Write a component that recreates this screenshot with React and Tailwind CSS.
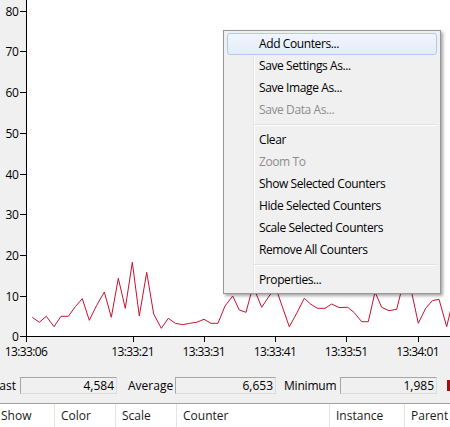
import React from "react";

const pts = [
  [32.3,317.3],[39.3,322.3],[46.3,316.3],[54,326.7],[61,316.3],[68.3,316.3],[75.3,306.7],[82.3,298.7],
  [89.3,320.3],[96.7,305.3],[104.3,292],[111.3,317.3],[118.3,278.3],[125.3,308.3],[132.3,262.3],[139.3,316],
  [146.7,272.3],[153.7,314],[161.3,328.3],[168.3,318.3],[175.3,323.3],[182.7,324.7],[189.7,323.3],[196.7,322.3],
  [204,319.3],[211,323.3],[218,323.3],[225,306],[232.7,296],[239.3,310],[246,312.3],[253,286],[261.7,307.3],
  [268.5,297],[275.5,287],[282.4,306.9],[289.3,326.7],[296.7,313.3],[304.3,298.3],[310.5,304],[317.3,308.3],
  [325,308.3],[331.7,304],[339,307.5],[347.7,307.3],[354.3,312.7],[361.7,321.7],[368.3,321.7],[375,292],
  [381.7,307.3],[389,310.7],[396.7,309.3],[403,284],[410.5,287],[418.3,323.3],[425.7,308.3],[432.3,300.7],
  [439,299.3],[446.7,326.7],[453,300],
];

const yLabels = [80, 70, 60, 50, 40, 30, 20, 10, 0];
const yOf = (v) => 336.3 - v * 4.07;
const xLabels = [
  ["13:33:06", 26],
  ["13:33:21", 132.6],
  ["13:33:31", 203.8],
  ["13:33:41", 275],
  ["13:33:51", 346.2],
  ["13:34:01", 417.6],
];

function Chart() {
  return (
    <svg width="450" height="368" className="block" style={{ fontFamily: "inherit" }}>
      <rect x="26" y="0" width="424" height="336" fill="#ffffff" />
      <polyline
        points={pts.map((p) => p.join(",")).join(" ")}
        fill="none"
        stroke="#cc0f2d"
        strokeWidth="1"
        strokeLinejoin="miter"
      />
      <line x1="26.5" y1="0" x2="26.5" y2="337" stroke="#000" strokeWidth="1" />
      <line x1="26" y1="336.5" x2="450" y2="336.5" stroke="#000" strokeWidth="1" />
      {yLabels.map((v) => {
        const y = Math.round(yOf(v)) + 0.5;
        return (
          <g key={v}>
            <line x1="20" y1={y} x2="26" y2={y} stroke="#000" strokeWidth="1" />
            <text x="18.5" y={y + 4.5} fontSize="12" textAnchor="end" fill="#000" letterSpacing="-0.4">
              {v}
            </text>
          </g>
        );
      })}
      {xLabels.map(([t, x]) => {
        const xx = Math.round(x) + 0.5;
        return (
          <g key={t}>
            <line x1={xx} y1="336" x2={xx} y2="342" stroke="#000" strokeWidth="1" />
            <text x={x} y="355.5" fontSize="12" textAnchor="middle" fill="#000" letterSpacing="-0.6">
              {t}
            </text>
          </g>
        );
      })}
    </svg>
  );
}

function Item({ children, disabled, active }) {
  return (
    <div
      className={
        "h-[22px] flex items-center pl-[31px] rounded-[3px] border tracking-[-0.4px] " +
        (active
          ? "border-[#aecbef] bg-gradient-to-b from-[#f1f6fc] to-[#e2ecf8] relative z-10"
          : "border-transparent") +
        (disabled ? " text-[#8d8d8d]" : " text-black")
      }
    >
      {children}
    </div>
  );
}

function Sep() {
  return (
    <div className="h-[8px] flex flex-col justify-center pl-[27px]">
      <div className="h-px bg-[#e0e0e0]" />
      <div className="h-px bg-white" />
    </div>
  );
}

function Menu() {
  return (
    <div className="absolute left-[223px] top-[30px] w-[218px] border border-[#979797] bg-[#f0f0f0] shadow-[2px_2px_3px_rgba(0,0,0,0.35)] p-[2px] px-[3px]">
      <div className="absolute top-0 bottom-0 left-[29px] w-px bg-[#e2e3e3]" />
      <div className="absolute top-0 bottom-0 left-[30px] w-px bg-white" />
      <div className="relative">
        <Item active>Add Counters...</Item>
        <Item>Save Settings As...</Item>
        <Item>Save Image As...</Item>
        <Item disabled>Save Data As...</Item>
        <Sep />
        <Item>Clear</Item>
        <Item disabled>Zoom To</Item>
        <Item>Show Selected Counters</Item>
        <Item>Hide Selected Counters</Item>
        <Item>Scale Selected Counters</Item>
        <Item>Remove All Counters</Item>
        <Sep />
        <Item>Properties...</Item>
      </div>
    </div>
  );
}

function StatBox({ value, w }) {
  return (
    <div
      className={
        "h-[17px] border border-[#a6a6a6] border-b-[#dcdcdc] border-r-[#dcdcdc] flex items-center justify-end pr-[2px] leading-none " +
        w
      }
    >
      {value}
    </div>
  );
}

function Stats() {
  return (
    <div className="h-[35px] flex items-center -ml-[7px]">
      <div className="w-[27px] shrink-0">Last</div>
      <StatBox value="4,584" w="w-[97px]" />
      <div className="w-[58px] shrink-0 pl-[11px]">Average</div>
      <StatBox value="6,653" w="w-[101px]" />
      <div className="w-[64px] shrink-0 pl-[8px] tracking-[-0.2px]">Minimum</div>
      <StatBox value="1,985" w="w-[97px]" />
      <div className="ml-[10px] w-[3px] h-[11px] bg-[#a01010]" />
    </div>
  );
}

function Header() {
  const cols = [
    ["Show", "w-[60px]"],
    ["Color", "w-[61px]"],
    ["Scale", "w-[61px]"],
    ["Counter", "w-[153px]"],
    ["Instance", "w-[75px]"],
    ["Parent", "w-[80px]"],
  ];
  return (
    <div className="border-t border-[#a0a0a0] bg-white h-[30px] flex -ml-[5px]">
      {cols.map(([t, w]) => (
        <div key={t} className={"shrink-0 border-r border-[#e5e5e5] pl-[6px] pt-[3px] text-[#1a1a1a] " + w}>
          {t}
        </div>
      ))}
    </div>
  );
}

export default function App() {
  return (
    <div className="relative w-[450px] h-[427px] overflow-hidden bg-[#f0f0f0] text-[12px] text-black font-['Open_Sans',sans-serif]">
      <Chart />
      <Stats />
      <Header />
      <Menu />
    </div>
  );
}
